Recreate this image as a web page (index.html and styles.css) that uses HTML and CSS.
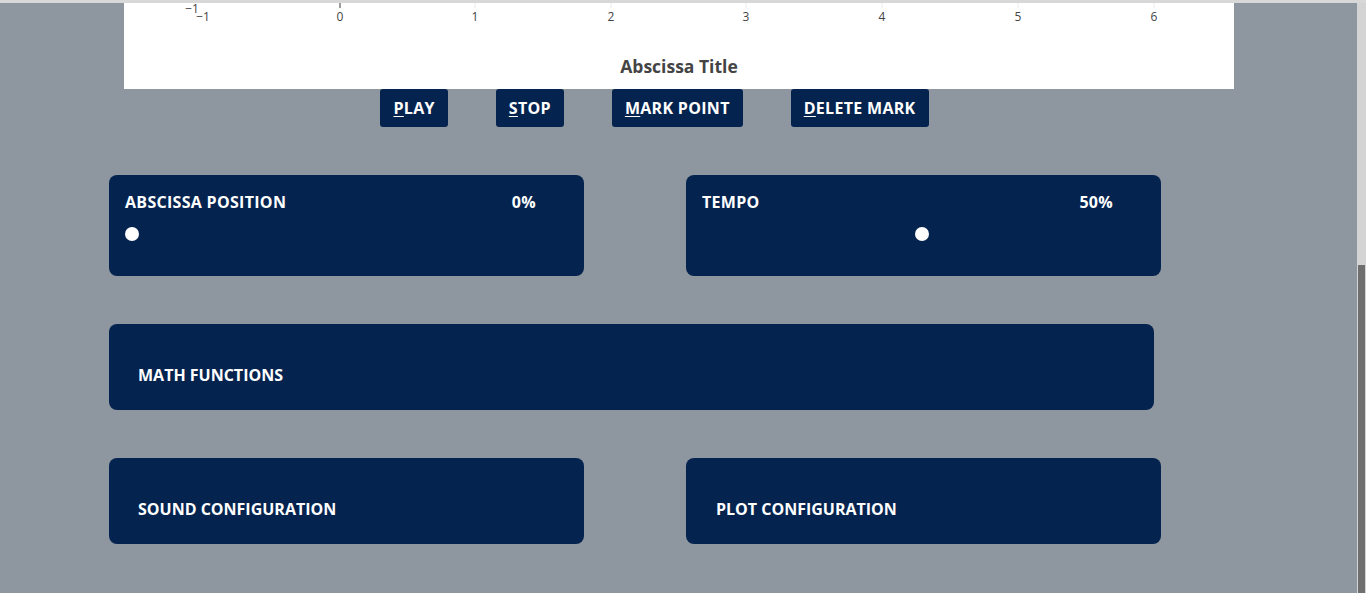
FILE: index.html
```html
<!DOCTYPE html>
<html lang="en">
<head>
<meta charset="utf-8">
<title>Sonification</title>
<link rel="stylesheet" href="styles.css">
</head>
<body>
<div class="topband"></div>
<div class="frame">
  <main class="page">
    <div class="plot">
      <svg class="plot-svg" width="1110" height="85" viewBox="0 0 1110 85">
        <g class="grid">
          <line x1="216" y1="0" x2="216" y2="5"/>
          <line x1="351" y1="0" x2="351" y2="5"/>
          <line x1="487" y1="0" x2="487" y2="5"/>
          <line x1="622" y1="0" x2="622" y2="5"/>
          <line x1="758" y1="0" x2="758" y2="5"/>
          <line x1="894" y1="0" x2="894" y2="5"/>
          <line x1="1030" y1="0" x2="1030" y2="5"/>
        </g>
        <line class="zero" x1="216" y1="0" x2="216" y2="5"/>
        <g class="ticks">
          <text x="68" y="10">−1</text>
          <text x="79" y="18">−1</text>
          <text x="216" y="18">0</text>
          <text x="351" y="18">1</text>
          <text x="487" y="18">2</text>
          <text x="622" y="18">3</text>
          <text x="758" y="18">4</text>
          <text x="894" y="18">5</text>
          <text x="1030" y="18">6</text>
        </g>
        <text class="axis-title" x="555" y="70">Abscissa Title</text>
      </svg>
    </div>

    <div class="controls">
      <button class="btn"><u>P</u>LAY</button>
      <button class="btn"><u>S</u>TOP</button>
      <button class="btn"><u>M</u>ARK POINT</button>
      <button class="btn"><u>D</u>ELETE MARK</button>
    </div>

    <section class="cards">
      <div class="card card-slider">
        <div class="card-head">
          <span>ABSCISSA POSITION</span>
          <span>0%</span>
        </div>
        <input class="slider" type="range" min="0" max="100" value="0">
      </div>
      <div class="card card-slider">
        <div class="card-head">
          <span>TEMPO</span>
          <span>50%</span>
        </div>
        <input class="slider" type="range" min="0" max="100" value="50">
      </div>
      <div class="card card-wide">
        <span class="card-title">MATH FUNCTIONS</span>
      </div>
      <div class="card card-panel">
        <span class="card-title">SOUND CONFIGURATION</span>
      </div>
      <div class="card card-panel">
        <span class="card-title">PLOT CONFIGURATION</span>
      </div>
    </section>
  </main>
  <div class="scrollbar"><div class="thumb"></div></div>
</div>
</body>
</html>
```

FILE: styles.css
```css
html, body {
  margin: 0;
  padding: 0;
  height: 100%;
  overflow: hidden;
}
body {
  background: #8e979f;
  font-family: "Open Sans", "Noto Sans", sans-serif;
  display: flex;
  flex-direction: column;
}
.topband {
  height: 3px;
  background: #d8d8d8;
  flex: none;
}
.frame {
  flex: 1;
  display: flex;
  min-height: 0;
}
.page {
  flex: 1;
  min-width: 0;
}
.scrollbar {
  width: 9px;
  background: #d4d4d4;
  display: flex;
  flex-direction: column;
  justify-content: flex-end;
  padding: 0 1px 0 1px;
  box-sizing: border-box;
}
.thumb {
  height: 328px;
  background: #6f6f6f;
}

.plot {
  margin-left: 124px;
  width: 1110px;
  height: 86px;
  background: #fff;
}
.plot-svg {
  display: block;
}
.grid line {
  stroke: #ebebeb;
  stroke-width: 1;
}
.zero {
  stroke: #444;
  stroke-width: 1;
}
.ticks text {
  font-family: "Open Sans", sans-serif;
  font-size: 12px;
  fill: #444;
  text-anchor: middle;
}
.axis-title {
  font-family: "Open Sans", sans-serif;
  font-weight: 700;
  font-size: 17.5px;
  fill: #444;
  text-anchor: middle;
}

.controls {
  display: flex;
  justify-content: center;
}
.btn {
  height: 38px;
  margin-right: 48px;
  padding: 0 13px;
  border: 0;
  border-radius: 3px;
  background: #04234f;
  color: #fff;
  font-family: "Open Sans", sans-serif;
  font-weight: 700;
  font-size: 16px;
  letter-spacing: 0.3px;
  cursor: pointer;
}
.btn u {
  text-underline-offset: 2px;
}

.cards {
  display: grid;
  grid-template-columns: 475px 475px;
  column-gap: 102px;
  row-gap: 48px;
  margin: 48px 0 0 109px;
}
.card {
  background: #04234f;
  border-radius: 8px;
  color: #fff;
  font-weight: 700;
  font-size: 16px;
  box-sizing: border-box;
}
.card-slider {
  height: 101px;
  padding: 17px 0 0 16px;
}
.card-head {
  display: flex;
  justify-content: space-between;
  width: 411px;
  line-height: 20px;
  letter-spacing: 0.3px;
}
.slider {
  -webkit-appearance: none;
  appearance: none;
  display: block;
  width: 440px;
  height: 14px;
  margin: 15px 0 0 0;
  background: transparent;
}
.slider::-webkit-slider-runnable-track {
  height: 14px;
  background: transparent;
}
.slider::-webkit-slider-thumb {
  -webkit-appearance: none;
  appearance: none;
  width: 14px;
  height: 14px;
  border-radius: 50%;
  background: #fff;
  border: 0;
}
.card-wide {
  grid-column: 1 / 3;
  width: 1045px;
}
.card-wide,
.card-panel {
  height: 86px;
  display: flex;
  align-items: center;
  padding: 16px 0 0 29px;
}
.card-panel + .card-panel {
  padding-left: 30px;
}
```
